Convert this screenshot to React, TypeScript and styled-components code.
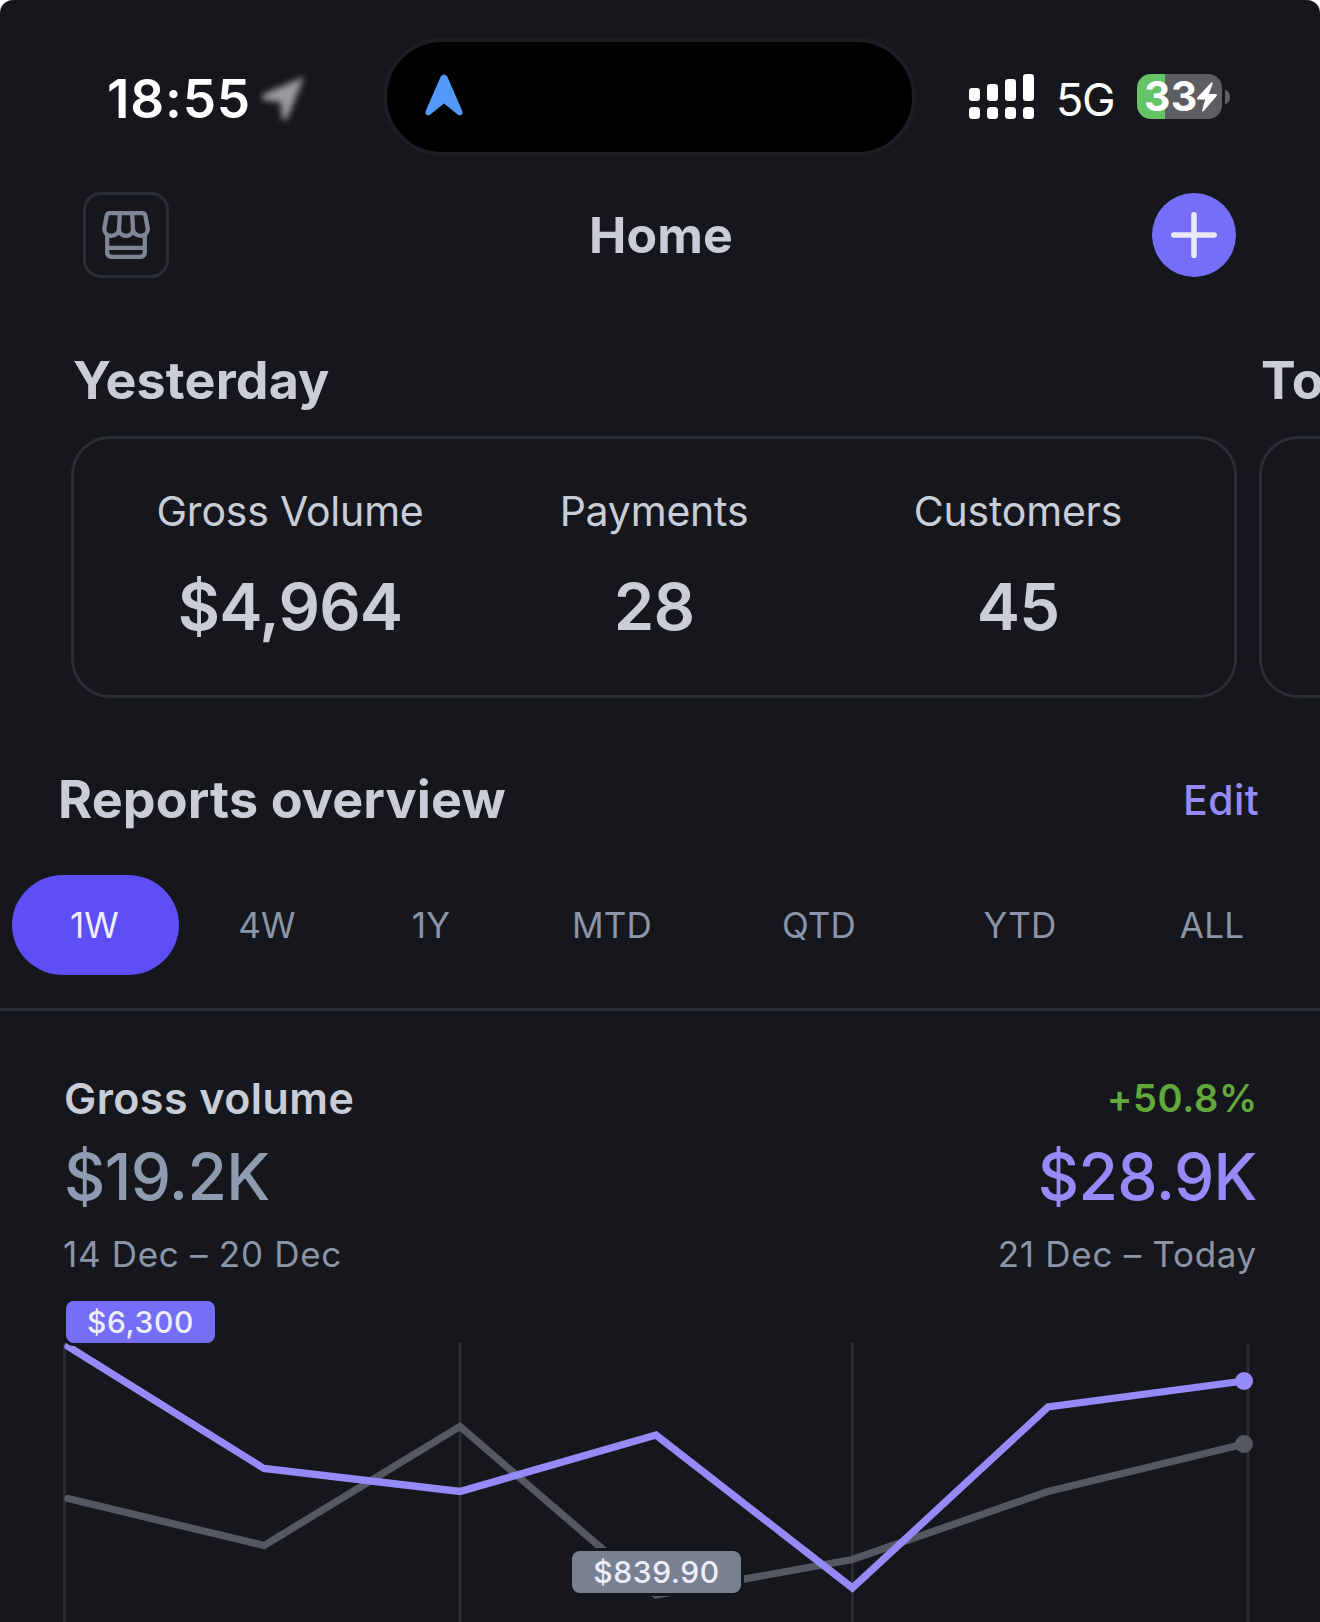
import React from "react";
import styled, { createGlobalStyle } from "styled-components";

const color = {
  bg: "#16171c",
  line: "#2b2e37",
  text: "#c9cdd8",
  muted: "#8b95a7",
  accent: "#958bf8",
};

const GlobalStyle = createGlobalStyle`
  * { box-sizing: border-box; }
  body { margin: 0; background: #fff; font-family: Inter, "Liberation Sans", sans-serif; }
`;

const Screen = styled.main`
  width: 1320px;
  height: 1622px;
  overflow: hidden;
  display: flex;
  flex-direction: column;
  background: ${color.bg};
  color: ${color.text};
  border-radius: 13px 13px 0 0;
  white-space: nowrap;
`;

/* Status bar */
const StatusBar = styled.div`
  display: grid;
  grid-template-columns: 383px 533px 1fr;
  align-items: center;
  padding-top: 38px;
  height: 156px;
  color: #fff;
`;
const TimeGroup = styled.div`
  display: flex;
  align-items: center;
  gap: 10px;
  padding: 3px 0 0 107px;
`;
const Time = styled.span`
  width: 145px;
  font-size: 53px;
  font-weight: 600;
  line-height: 60px;
  letter-spacing: 0.8px;
`;
const BlurredArrow = styled.svg`
  filter: blur(3.1px);
`;
const Island = styled.div`
  height: 118px;
  display: flex;
  align-items: center;
  padding: 0 0 5px 38px;
  border: 4px solid #1c1d22;
  border-radius: 59px;
  background: #000;
`;
const StatusRight = styled.div`
  display: flex;
  align-items: center;
  gap: 22px;
  padding: 0 0 1px 53px;
`;
const Network = styled.span`
  width: 59px;
  padding-top: 6px;
  font-size: 45px;
  font-weight: 400;
  line-height: 50px;
  letter-spacing: -1.3px;
`;
const BatteryGroup = styled.div`
  display: flex;
  align-items: center;
  gap: 3px;
`;
const Battery = styled.div`
  display: flex;
  align-items: center;
  width: 85px;
  height: 45px;
  padding-left: 7px;
  border-radius: 14px;
  background: linear-gradient(90deg, #65c466 28px, #5d5e63 28px);
  font-size: 41px;
  font-weight: 700;
  line-height: 45px;
  letter-spacing: 0.2px;
`;
const BatteryLevel = styled.span`
  width: 53px;
`;
const BatteryTip = styled.i`
  width: 5px;
  height: 14px;
  border-radius: 0 5px 5px 0 / 0 7px 7px 0;
  background: #5d5e63;
`;

/* Title bar */
const Header = styled.header`
  display: grid;
  grid-template-columns: 1fr auto 1fr;
  align-items: center;
  margin-top: 36px;
  padding: 0 84px 0 83px;
  height: 86px;
`;
const StoreButton = styled.button`
  display: flex;
  align-items: center;
  justify-content: center;
  width: 86px;
  height: 86px;
  padding: 0;
  border: 3px solid ${color.line};
  border-radius: 18px;
  background: none;
`;
const Title = styled.h1`
  margin: 0;
  padding-left: 3px;
  font-size: 50px;
  font-weight: 700;
  line-height: 60px;
  letter-spacing: 0.1px;
`;
const AddButton = styled.button`
  justify-self: end;
  width: 84px;
  height: 84px;
  padding: 0;
  border: 0;
  border-radius: 50%;
  background: #756ef9;
`;

/* Summary carousel */
const Carousel = styled.section`
  display: flex;
  gap: 22px;
  margin-top: 73px;
  padding-left: 71px;
`;
const Slide = styled.div`
  flex: 0 0 1166px;
`;
const SlideTitle = styled.h2`
  margin: 0 0 25px 2px;
  font-size: 52px;
  font-weight: 700;
  line-height: 60px;
  letter-spacing: 0.15px;
`;
const Card = styled.div`
  display: grid;
  grid-template-columns: repeat(3, 364px);
  justify-content: center;
  height: 262px;
  padding-top: 47px;
  border: 3px solid ${color.line};
  border-radius: 39px;
  text-align: center;
`;
const StatLabel = styled.div`
  font-size: 41px;
  line-height: 50px;
  letter-spacing: -0.2px;
`;
const StatValue = styled.div`
  margin-top: 33px;
  font-size: 65px;
  font-weight: 600;
  line-height: 76px;
  letter-spacing: -0.9px;
`;

/* Reports */
const ReportsHead = styled.div`
  display: flex;
  align-items: center;
  justify-content: space-between;
  margin-top: 72px;
  padding: 0 61px 0 58px;
`;
const ReportsTitle = styled.h2`
  margin: 0;
  font-size: 52px;
  font-weight: 700;
  line-height: 60px;
  letter-spacing: 0.15px;
`;
const EditLink = styled.a`
  color: ${color.accent};
  font-size: 41px;
  font-weight: 450;
  line-height: 60px;
  letter-spacing: 0.4px;
`;
const Tabs = styled.nav`
  display: grid;
  grid-template-columns: 167px 176px 152px 210px 204px 198px 186px;
  margin-top: 45px;
  padding: 0 0 33px 12px;
  border-bottom: 3px solid ${color.line};
`;
const Tab = styled.button<{ $active?: boolean }>`
  height: 100px;
  padding: 0 ${(p) => (p.$active ? 2 : 0)}px 0 0;
  border: 0;
  border-radius: 51px / 50px;
  background: ${(p) => (p.$active ? "#5e4ef5" : "none")};
  color: ${(p) => (p.$active ? "#efeffc" : color.muted)};
  font: 400 35px/100px Inter, sans-serif;
  letter-spacing: 0.2px;
`;
const Report = styled.section`
  display: flex;
  flex-direction: column;
  padding-top: 62px;
`;
const Row = styled.div`
  display: flex;
  justify-content: space-between;
  padding: 0 63px 0 63px;
`;
const ReportName = styled.h3`
  margin: 0 0 0 1px;
  font-size: 43px;
  font-weight: 600;
  line-height: 50px;
  letter-spacing: 0.45px;
`;
const Change = styled.span`
  margin-right: -1px;
  color: #61a93b;
  font-size: 38px;
  font-weight: 600;
  line-height: 50px;
  letter-spacing: 0.7px;
`;
const Total = styled.span<{ $current?: boolean }>`
  margin: 15px 0 0 ${(p) => (p.$current ? 0 : 1)}px;
  color: ${(p) => (p.$current ? color.accent : "#8f9bb0")};
  font-size: 64px;
  font-weight: 500;
  line-height: 77px;
  letter-spacing: -0.6px;
`;
const Period = styled.span`
  margin-top: 17px;
  color: ${color.muted};
  font-size: 35px;
  line-height: 44px;
  letter-spacing: 0.7px;
`;
const Chart = styled.div`
  position: relative;
  height: 346px;
`;
const Plot = styled.svg`
  display: block;
`;
const PointTag = styled.span<{ $x: number; $y: number; $w: number; $bg: string }>`
  position: absolute;
  left: ${(p) => p.$x}px;
  top: ${(p) => p.$y}px;
  width: ${(p) => p.$w}px;
  height: 42px;
  border-radius: 8px;
  background: ${(p) => p.$bg};
  box-shadow: 0 0 0 3px ${color.bg};
  color: #eeeefa;
  font-size: 30px;
  font-weight: 450;
  line-height: 43px;
  letter-spacing: 0.6px;
  text-align: center;
`;

const SignalIcon = () => (
  <svg width="65" height="45" viewBox="0 0 65 45" fill="#fff">
    {[14, 10, 5, 0].map((top, i) => (
      <g key={top}>
        <rect x={i * 18} y={top} width="11" height={27 - top} rx="3.2" />
        <rect x={i * 18} y="33" width="11" height="12" rx="3.5" />
      </g>
    ))}
  </svg>
);

const StoreIcon = () => (
  <svg width="48" height="48" viewBox="0 0 48 48" fill="none" stroke="#7d8596" strokeWidth="4.3" strokeLinejoin="round">
    <path d="M2.2 17.8 4.6 4.8Q5.1 2.2 7.8 2.2H40.2Q42.9 2.2 43.4 4.8L45.8 17.8C45.8 22 42.7 24.8 38.7 24.8S31 22 31 18C31 22 28 24.8 24 24.8S17 22 17 18C17 22 13.3 24.8 9.3 24.8S2.2 22 2.2 17.8Z" />
    <path d="M17.9 2.2 17 18M30.1 2.2 31 18M5.2 23.5V41Q5.2 45.8 10 45.8H38Q42.8 45.8 42.8 41V23.5M5.2 36.8H42.8" />
  </svg>
);

const X = [68, 264, 460, 656, 852.4, 1048, 1244];
const CURRENT = [70.4, 192.5, 215.5, 159, 312, 131, 105];
const PREVIOUS = [222.5, 269.5, 150.5, 319, 283.5, 215.5, 168];
const toPoints = (ys: number[]) => ys.map((y, i) => `${X[i]},${y}`).join(" ");

const STATS = [
  ["Gross Volume", "$4,964"],
  ["Payments", "28"],
  ["Customers", "45"],
];
const RANGES = ["1W", "4W", "1Y", "MTD", "QTD", "YTD", "ALL"];

export default function App() {
  return (
    <Screen>
      <GlobalStyle />
      <StatusBar>
        <TimeGroup>
          <Time>18:55</Time>
          <BlurredArrow width="42" height="46" viewBox="0 0 42 46" overflow="visible">
            <path d="M40 3 24 42Q22 44 21 41L20 25 3 23Q-1 21 3 19Z" fill="#9a9b9f" stroke="#9a9b9f" strokeWidth="2.5" />
          </BlurredArrow>
        </TimeGroup>
        <Island>
          <svg width="38" height="42" viewBox="0 0 38 42" fill="#5299f8">
            <path d="M15.7 2.6Q19-1.8 22.3 2.6L37.4 37.2Q38.2 41.8 33.6 41.3L19 29.6 4.4 41.3Q-.2 41.8.6 37.2Z" />
          </svg>
        </Island>
        <StatusRight>
          <SignalIcon />
          <Network>5G</Network>
          <BatteryGroup>
            <Battery>
              <BatteryLevel>33</BatteryLevel>
              <svg width="20" height="30" viewBox="0 0 20 30" fill="#fff" overflow="visible">
                <path d="M14.5.3 0 15.8Q-.6 17.4 1 17.4H8.2L5 28.4Q5.4 30.2 6.8 29L19.8 13.8Q20.4 12.2 18.8 12H12L15.6 1.4Q15.6-.2 14.5.3Z" />
              </svg>
            </Battery>
            <BatteryTip />
          </BatteryGroup>
        </StatusRight>
      </StatusBar>

      <Header>
        <StoreButton aria-label="Store">
          <StoreIcon />
        </StoreButton>
        <Title>Home</Title>
        <AddButton aria-label="Add">
          <svg width="84" height="84" viewBox="0 0 84 84" stroke="#e9e9f7" strokeWidth="5.6" strokeLinecap="round">
            <path d="M42 21.8V62.2M21.8 42H62.2" />
          </svg>
        </AddButton>
      </Header>

      <Carousel>
        <Slide>
          <SlideTitle>Yesterday</SlideTitle>
          <Card>
            {STATS.map(([label, value]) => (
              <div key={label}>
                <StatLabel>{label}</StatLabel>
                <StatValue>{value}</StatValue>
              </div>
            ))}
          </Card>
        </Slide>
        <Slide>
          <SlideTitle>Today</SlideTitle>
          <Card />
        </Slide>
      </Carousel>

      <ReportsHead>
        <ReportsTitle>Reports overview</ReportsTitle>
        <EditLink>Edit</EditLink>
      </ReportsHead>
      <Tabs>
        {RANGES.map((range, i) => (
          <Tab key={range} $active={i === 0}>
            {range}
          </Tab>
        ))}
      </Tabs>

      <Report>
        <Row>
          <ReportName>Gross volume</ReportName>
          <Change>+50.8%</Change>
        </Row>
        <Row>
          <Total>$19.2K</Total>
          <Total $current>$28.9K</Total>
        </Row>
        <Row>
          <Period>14 Dec – 20 Dec</Period>
          <Period>21 Dec – Today</Period>
        </Row>
        <Chart>
          <Plot width="1320" height="346" viewBox="0 0 1320 346" fill="none">
            <path d="M64.5 67V346M460 67V346M852.4 67V346M1248 67V346" stroke="#2b2d35" strokeWidth="2.8" />
            <polyline points={toPoints(PREVIOUS)} stroke="#535863" strokeWidth="7.3" strokeLinecap="round" />
            <polyline points={toPoints(CURRENT)} stroke="#958bf8" strokeWidth="7.3" strokeLinecap="round" />
            <circle cx={X[6]} cy={PREVIOUS[6]} r="9" fill="#535863" />
            <circle cx={X[6]} cy={CURRENT[6]} r="9" fill="#958bf8" />
          </Plot>
          <PointTag $x={66} $y={25} $w={149} $bg="#756ef9">$6,300</PointTag>
          <PointTag $x={572} $y={275} $w={169} $bg="#788191">$839.90</PointTag>
        </Chart>
      </Report>
    </Screen>
  );
}
